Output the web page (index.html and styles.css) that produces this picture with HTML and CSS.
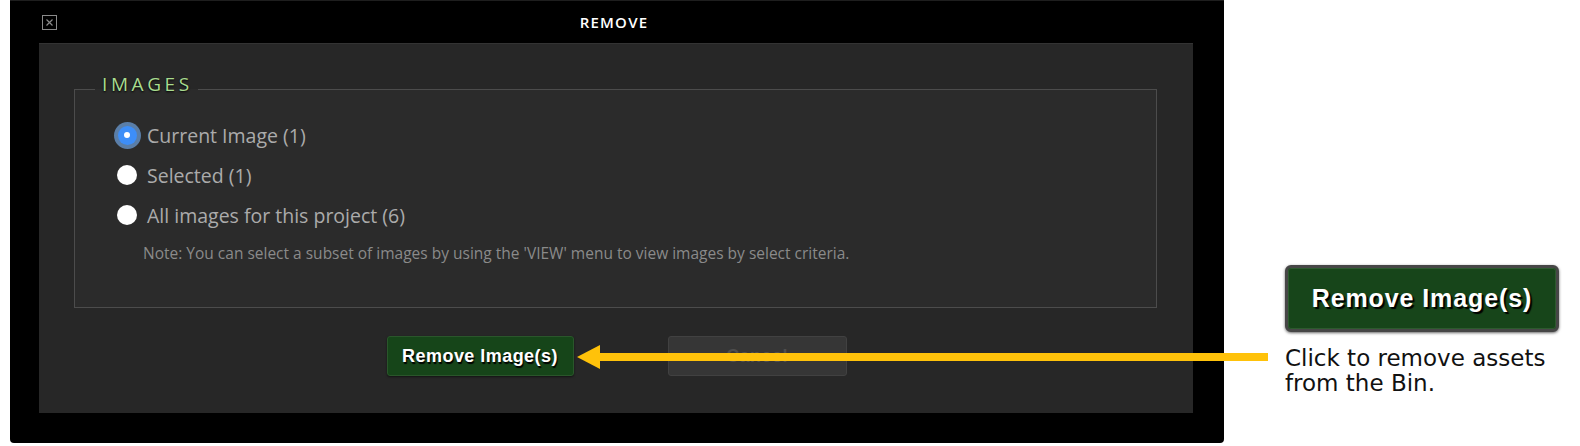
FILE: index.html
```html
<!DOCTYPE html>
<html lang="en">
<head>
<meta charset="utf-8">
<title>Remove</title>
<link rel="stylesheet" href="styles.css">
</head>
<body>
<div class="page">
  <div class="dialog">
    <div class="titlebar">
      <span class="close">
        <svg width="15" height="15" viewBox="0 0 15 15"><rect x="0.5" y="0.5" width="14" height="14" fill="none" stroke="#8a8a8a" stroke-width="1"/><path d="M4.5 4.5 L10.5 10.5 M10.5 4.5 L4.5 10.5" stroke="#8a8a8a" stroke-width="1.2" fill="none"/></svg>
      </span>
      <div class="title">REMOVE</div>
      <span></span>
    </div>
    <div class="content">
      <fieldset class="group">
        <legend>IMAGES</legend>
        <label class="opt"><span class="radio on"></span>Current Image (1)</label>
        <label class="opt"><span class="radio"></span>Selected (1)</label>
        <label class="opt"><span class="radio"></span>All images for this project (6)</label>
        <p class="note">Note: You can select a subset of images by using the 'VIEW' menu to view images by select criteria.</p>
      </fieldset>
      <div class="actions">
        <button class="btn primary">Remove Image(s)</button>
        <button class="btn cancel">Cancel</button>
      </div>
    </div>
  </div>
  <div class="callout">
    <div class="big-btn">Remove Image(s)</div>
    <p class="caption">Click to remove assets<br>from the Bin.</p>
  </div>
  <svg class="arrow" width="691" height="24" viewBox="0 0 691 24"><rect x="22" y="8" width="669" height="8" fill="#ffc20a"/><polygon points="0,12 23,0 23,24" fill="#ffc20a"/></svg>
</div>
</body>
</html>
```
FILE: styles.css
```css
html, body {
  margin: 0;
  padding: 0;
  background: #fff;
}
.page {
  position: relative;
  display: flex;
  align-items: flex-start;
  width: 1580px;
  height: 446px;
  padding-left: 10px;
  box-sizing: border-box;
  font-family: "Open Sans", "Liberation Sans", sans-serif;
}
.dialog {
  width: 1214px;
  height: 443px;
  flex: none;
  background: #000;
  border-top: 1px solid #1e1e1e;
  border-radius: 0 0 4px 4px;
  box-sizing: border-box;
}
.titlebar {
  height: 42px;
  display: grid;
  grid-template-columns: 1fr auto 1fr;
  align-items: center;
}
.close {
  justify-self: start;
  margin-left: 32px;
  width: 15px;
  height: 15px;
  display: block;
}
.close svg { display: block; }
.title {
  color: #fff;
  font-size: 15px;
  font-weight: 600;
  letter-spacing: 1.2px;
  line-height: 20px;
  padding-right: 6px;
}
.content {
  margin-left: 29px;
  width: 1154px;
  height: 370px;
  background: #272727;
  border-top: 1px solid #333;
  box-sizing: border-box;
  padding: 30px 36px 0 35px;
}
.group {
  margin: 0;
  padding: 10px 0 44px 0;
  border: 1px solid #4c4c4c;
  background: #2b2b2b;
  min-width: 0;
}
.group legend {
  margin-left: 20px;
  padding: 0 5px 11px 7px;
  font-size: 19px;
  line-height: 20px;
  letter-spacing: 3.6px;
  color: #a9dc8f;
  text-shadow: 0 1px 2px #000;
}
.opt {
  display: flex;
  align-items: center;
  height: 40px;
  gap: 10px;
  margin-left: 42px;
  color: #ababab;
  font-size: 19.5px;
}
.radio {
  width: 20px;
  height: 20px;
  border-radius: 50%;
  background: #fff;
  flex: none;
  box-sizing: border-box;
  position: relative;
}
.radio.on {
  background: #3d8ef8;
  box-shadow: 0 0 0 4px #5a7ea8;
  width: 19px;
  height: 19px;
  margin-left: 0.5px;
  margin-right: 0.5px;
}
.radio.on::after {
  content: "";
  position: absolute;
  left: 6.5px;
  top: 6.5px;
  width: 6px;
  height: 6px;
  border-radius: 50%;
  background: #fff;
}
.note {
  margin: 8px 0 0 68px;
  font-size: 15.5px;
  line-height: 20px;
  color: #8a8a8a;
}
.actions {
  display: flex;
  justify-content: center;
  gap: 94px;
  margin-top: 28px;
  padding-left: 2px;
}
.btn {
  height: 40px;
  border-radius: 3px;
  font-family: "Liberation Sans", Arial, sans-serif;
  font-weight: bold;
  font-size: 18px;
  letter-spacing: 0.45px;
  padding: 0;
  box-sizing: border-box;
}
.btn.primary {
  width: 187px;
  background: #164519;
  border: 1px solid #2a562b;
  color: #fff;
  text-shadow: 1px 2px 1px #000;
  box-shadow: 0 1px 2px rgba(0,0,0,0.5);
}
.btn.cancel {
  width: 179px;
  background: #363636;
  border: 1px solid #414141;
  color: #4e4e4e;
}
.callout {
  padding-left: 61px;
  padding-top: 265px;
}
.big-btn {
  width: 274px;
  height: 67px;
  box-sizing: border-box;
  background: #17451a;
  border: 3px solid #464646;
  border-radius: 6px;
  box-shadow: inset 0 0 0 1px #2d5a2e, 0 1px 3px rgba(0,0,0,0.6);
  display: flex;
  align-items: center;
  justify-content: center;
  color: #fff;
  font-family: "Liberation Sans", Arial, sans-serif;
  font-weight: bold;
  font-size: 25px;
  letter-spacing: 0.9px;
  text-shadow: 2px 2px 1px #000;
}
.caption {
  margin: 14px 0 0;
  font-family: "DejaVu Sans", Verdana, sans-serif;
  font-size: 23px;
  line-height: 25px;
  color: #111;
}
.arrow {
  position: absolute;
  left: 577px;
  top: 345px;
}
```
